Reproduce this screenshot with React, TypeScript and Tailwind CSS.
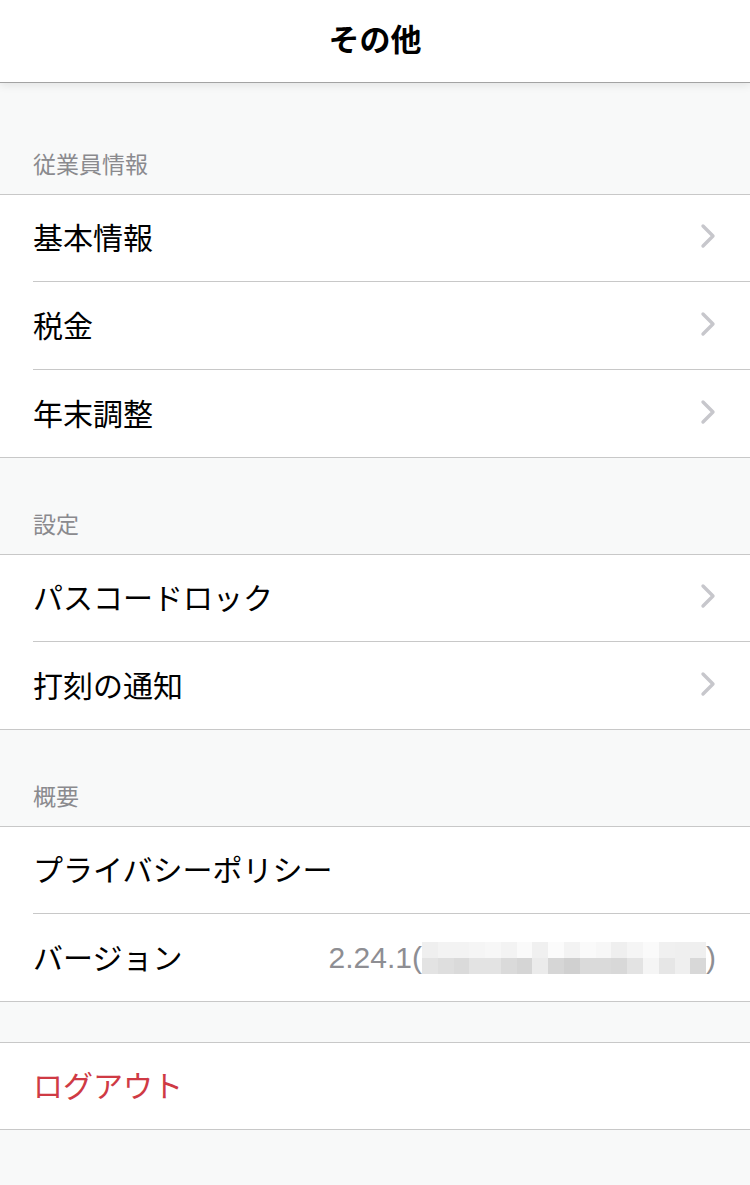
const jp = { fontFamily: '"Noto Sans CJK JP", "Noto Sans", sans-serif' };

const blurTop = ['#efefef', '#f3f3f3', '#f3f3f3', '#f5f5f5', '#f7f7f7', '#f3f3f3', '#fafafa', '#f0f0f0', '#fbfbfb', '#f3f3f3', '#fafafa', '#f7f7f7', '#efefef', '#f5f5f5', '#fafafa', '#f0f0f0', '#efefef', '#efefef'];
const blurBottom = ['#e3e3e3', '#dedede', '#dadada', '#e3e3e3', '#e3e3e3', '#dadada', '#d5d5d5', '#ebebeb', '#d6d6d6', '#d0d0d0', '#dadada', '#dadada', '#d8d8d8', '#e3e3e3', '#f5f5f5', '#e6e6e6', '#efefef', '#d8d8d8'];

function Chevron() {
  return (
    <svg width="16" height="26" viewBox="0 0 16 26" className="shrink-0">
      <path d="M3 3 L13 13 L3 23" fill="none" stroke="#c7c7cc" strokeWidth="3.4" strokeLinecap="round" strokeLinejoin="round" />
    </svg>
  );
}

function SectionLabel({ label, first }: { label: string; first?: boolean }) {
  return (
    <div className={`${first ? 'h-[112px]' : 'h-[97px]'} flex items-end pl-[33px] pb-[16px] border-b border-[#c8c8c8]`}>
      <span className="text-[23px] leading-[30px] text-[#8a8a8e]">{label}</span>
    </div>
  );
}

function Row({ label, chevron, first, last, right }: { label: string; chevron?: boolean; first?: boolean; last?: boolean; right?: React.ReactNode }) {
  const h = first ? 'h-[87px]' : last ? 'h-[87px]' : 'h-[88px]';
  return (
    <div className={`bg-white pl-[33px] ${last ? 'border-b border-[#c8c8c8]' : ''}`}>
      <div className={`${h} ${last ? '' : 'border-b border-[#c8c8c8]'} flex items-center justify-between pr-[34px] pb-[4px]`}>
        <span className="text-[30px] leading-[40px] text-black">{label}</span>
        {chevron && <Chevron />}
        {right}
      </div>
    </div>
  );
}

function Version() {
  return (
    <div className="flex items-center text-[30px] leading-[40px] text-[#8e8e93] mt-[4px]" style={{ fontFamily: '"Liberation Sans", Arial, sans-serif' }}>
      <span>2.24.1(</span>
      <div className="flex flex-col w-[284px]">
        <div className="flex h-[16px]">
          {blurTop.map((c, i) => (
            <div key={i} className="flex-1" style={{ backgroundColor: c }} />
          ))}
        </div>
        <div className="flex h-[16px]">
          {blurBottom.map((c, i) => (
            <div key={i} className="flex-1" style={{ backgroundColor: c }} />
          ))}
        </div>
      </div>
      <span>)</span>
    </div>
  );
}

export default function App() {
  return (
    <main className="min-h-[1185px] bg-[#f8f9f9]" style={jp}>
      {/* Header */}
      <header className="relative z-10 h-[83px] bg-white border-b border-[#a3a3a3] flex items-center justify-center pb-[6px] shadow-[0_3px_8px_rgba(0,0,0,0.08)]">
        <h1 className="text-[31px] font-bold leading-[40px] text-black">その他</h1>
      </header>

      <SectionLabel label="従業員情報" first />
      <Row label="基本情報" chevron first />
      <Row label="税金" chevron />
      <Row label="年末調整" chevron last />

      <SectionLabel label="設定" />
      <Row label="パスコードロック" chevron first />
      <Row label="打刻の通知" chevron last />

      <SectionLabel label="概要" />
      <Row label="プライバシーポリシー" first />
      <Row label="バージョン" last right={<Version />} />

      <div className="h-[41px] border-b border-[#c8c8c8]" />
      <div className="bg-white pl-[33px] border-b border-[#c8c8c8] h-[87px] flex items-center pb-[4px]">
        <span className="text-[30px] leading-[40px] text-[#cf3a44]">ログアウト</span>
      </div>
    </main>
  );
}
